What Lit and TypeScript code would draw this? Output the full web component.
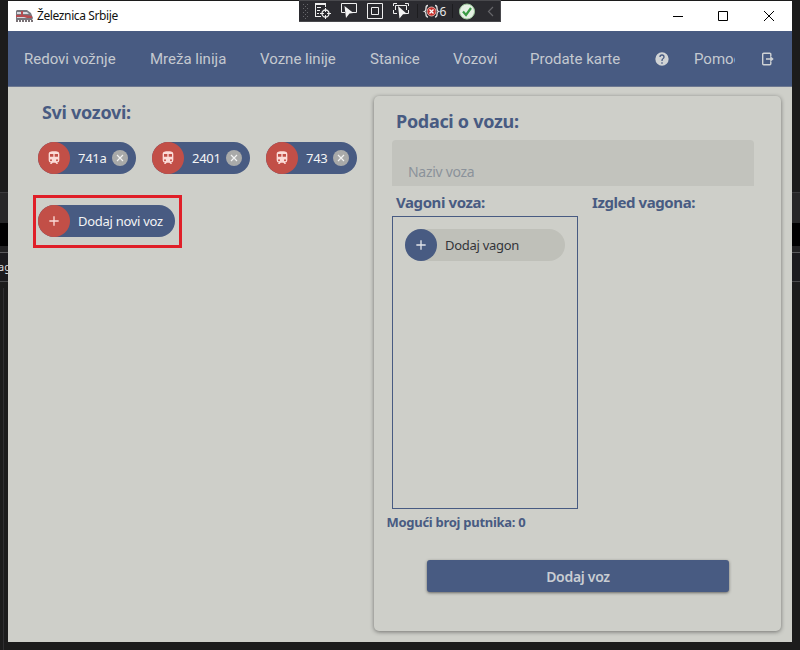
import { LitElement, html, css, svg } from "lit";
import { customElement, property } from "lit/decorators.js";

const trainPath = svg`<path fill-rule="evenodd" d="M12 2C8 2 4 2.500 4 6v9.500A3.500 3.500 0 0 0 7.500 19L6 20.500V21h2.200l2-2H14l2 2h2v-.5L16.500 19a3.500 3.500 0 0 0 3.500-3.500V6c0-3.500-3.600-4-8-4M7.500 17A1.500 1.500 0 1 1 9 15.500 1.500 1.500 0 0 1 7.500 17M11 10H6V6h5zm2 0V6h5v4zm3.500 7a1.500 1.500 0 1 1 1.500-1.500 1.500 1.500 0 0 1-1.500 1.500"/>`;
const plusPath = svg`<path d="M19 13h-6v6h-2v-6H5v-2h6V5h2v6h6z"/>`;

@customElement("icon-chip")
class IconChip extends LitElement {
  @property() label = "";
  @property() icon = "plus";
  @property({ type: Boolean }) removable = false;
  @property({ type: Boolean, reflect: true }) muted = false;
  static styles = css`
    :host { display: flex; align-items: center; box-sizing: border-box; height: 32px; border-radius: 16px; background: #485b82; color: #f3f4f5; font: 13px "Noto Sans", "Open Sans", sans-serif; }
    :host([muted]) { background: #bfc0b9; color: #33353a; }
    .disc { width: 32px; height: 32px; flex: none; border-radius: 50%; background: #c24f47; display: flex; align-items: center; justify-content: center; }
    :host([muted]) .disc { background: #485b82; }
    .disc svg { width: 16px; height: 16px; fill: #fbdcd8; }
    :host([muted]) .disc svg { fill: #e2e5ea; }
    .label { margin-left: 8px; flex: 1; white-space: nowrap; letter-spacing: -0.28px; }
    .remove { width: 16px; height: 16px; margin-right: 8px; border-radius: 50%; background: #a9aaa9; }
    .remove svg { display: block; width: 16px; height: 16px; stroke: #f2f3f2; stroke-width: 1.2; }
  `;
  render() {
    return html`<span class="disc"><svg viewBox="0 0 24 24">${this.icon === "train" ? trainPath : plusPath}</svg></span>
      <span class="label">${this.label}</span>
      ${this.removable ? html`<span class="remove"><svg viewBox="0 0 16 16"><path d="M5 5l6 6M11 5l-6 6"/></svg></span>` : ""}`;
  }
}

@customElement("debug-toolbar")
class DebugToolbar extends LitElement {
  static styles = css`
    :host { display: block; width: 202px; height: 22px; }
    svg { display: block; font: 12px "Noto Sans", sans-serif; }
  `;
  render() {
    return html`<svg width="202" height="22" viewBox="0 0 202 22" fill="none">
      <defs><pattern id="grip" width="4" height="4" patternUnits="userSpaceOnUse"><path fill="#67676b" d="M0 0h1v1H0zM2 2h1v1H2z"/></pattern></defs>
      <path fill="#2b2b30" d="M0 0h202v22H0z"/><path fill="#49494d" d="M0 0h202v1H0zM0 21h202v1H0zM201 0h1v22h-1z"/>
      <path fill="url(#grip)" d="M4 3h5v16H4z"/>
      <g stroke="#eeeeee">
        <path d="M16 4h11M16.500 4v12M26.500 4v3M16 16.500h6M18 7.500h4M18 10.500h3M18 13.500h2" /><path stroke-width="2" d="M16 4h11"/>
        <circle cx="26.500" cy="13.500" r="3.500" stroke-width="1.300"/><path d="M26.500 8v4M26.500 15v4M21 13.500h4M28 13.500h4"/>
        <path d="M46 12.500h-3.500v-9h15v9H53"/>
        <path d="M68.500 3.500h15v15h-15zM72.500 7.500h7v7h-7z"/>
        <path d="M94.500 6V3.500H98M106 3.500h3.500V6M94.500 10v3.500H98M109.500 10v3.500H106M96.500 10V5.500h11V10"/>
      </g>
      <path fill="#f4f4f4" d="M45.500 6l9 7-4 .5-3.500 4.500zM99 6l9 8-4 .3-3.500 4.200z"/>
      <path stroke="#1d1d20" d="M118.500 4v14M153.500 4v14"/>
      <path stroke="#e4e4e4" stroke-width="1.300" d="M129 5.500c-2 0-2 1-2 2.500s0 3-1.500 3.500c1.500.5 1.500 1.500 1.500 3s0 2.500 2 2.500M136 5.500c2 0 2 1 2 2.500s0 3 1.500 3.500c-1.500.5-1.500 1.500-1.500 3s0 2.500-2 2.500"/>
      <circle cx="132.500" cy="11.500" r="4.500" fill="#c8332e" stroke="#f0c9c4" stroke-width=".8"/><path stroke="#fff" stroke-width="1.300" d="M130.500 9.500l4 4M134.500 9.500l-4 4"/>
      <text x="140.500" y="16" fill="#e8e8e8">6</text>
      <circle cx="168" cy="11.500" r="7.500" fill="#e5f0e4" stroke="#9ecb9d"/><path stroke="#389b43" stroke-width="2.200" d="M164 11.500l3 3.500 5-7"/>
      <path stroke="#66666a" stroke-width="1.200" d="M194 7l-4.500 4.500L194 16"/>
    </svg>`;
  }
}

@customElement("app-root")
class AppRoot extends LitElement {
  static styles = css`
    :host { display: block; width: 800px; height: 650px; overflow: hidden; }
    * { box-sizing: border-box; }
    .desktop { position: relative; display: grid; grid-template-columns: 8px 784px 8px; height: 650px; padding-top: 1px; background: #1c1c1c; }
    .edge { display: flex; flex-direction: column; padding-top: 191px; overflow: hidden; }
    .panel { height: 31px; border-top: 1px solid #3b3b3d; background: #272728; }
    .black { height: 23px; background: #000; }
    .gap { height: 6px; background: #222223; }
    .strip { height: 30px; border-top: 1px solid #5a5a5c; border-bottom: 1px solid #4a4a4c; background: #1b1b1e; color: #ddd; font: 11px/28px "Noto Sans", sans-serif; white-space: nowrap; }
    .strip span { margin-left: -2px; }
    .rail { flex: 1; margin-top: 6px; margin-left: 3px; border-left: 1px solid #303032; }
    .window { height: 641px; background: #cecfc9; display: flex; flex-direction: column; }
    .titlebar { height: 30px; background: #fff; display: flex; align-items: center; padding: 0 17px 2px 8px; color: #111; font: 12px "Noto Sans", "Open Sans", sans-serif; }
    .title { flex: 1; margin-left: 4px; letter-spacing: -0.38px; }
    .titlebar svg { display: block; position: relative; top: 1px; }
    .toolbar { position: absolute; left: 299px; top: 0; }
    nav { height: 56px; flex: none; display: grid; grid-template-columns: 126px 110px 110px 83px 77px 124px 40px 67px 16px; align-items: center; padding-left: 16px; background: #485b82; border-bottom: 1px solid #6d7891; color: #c4c9d0; font: 15px Roboto, sans-serif; white-space: nowrap; }
    .clip { width: 41px; overflow: hidden; }
    nav svg { width: 16px; height: 16px; fill: #d0d3d5; display: block; }
    nav .exit { fill: none; stroke: #d0d3d5; stroke-width: 1.4; }
    .body { flex: 1; display: grid; grid-template-columns: 366px 407px; min-height: 0; }
    h1, h2, p { margin: 0; color: #485b82; font-family: "Noto Sans", "Open Sans", sans-serif; font-weight: 700; white-space: nowrap; }
    h1 { font-size: 18px; line-height: 24px; letter-spacing: -0.3px; }
    h2 { font-size: 15px; line-height: 20px; letter-spacing: -0.42px; }
    .trains { padding: 13px 0 0 25px; }
    .trains h1 { margin-left: 9px; }
    .chips { display: flex; gap: 16px; margin: 18px 0 0 5px; }
    .w98 { width: 98px; } .w91 { width: 91px; } .w160 { width: 160px; } .w137 { width: 137px; }
    .highlight { width: 149px; height: 53px; margin-top: 21px; border: 3px solid #e01f28; padding: 7px 2px; }
    .card { height: 535px; margin-top: 9px; border-radius: 5px; background: #cecfc9; box-shadow: 0 1px 4px rgba(0,0,0,.45); padding: 13px 27px 0 18px; display: flex; flex-direction: column; }
    .card h1 { margin-left: 4px; }
    .field { height: 46px; margin-top: 7px; flex: none; border-radius: 4px 4px 0 0; background: #c2c3bd; padding: 22px 16px 0; color: #8b929a; font: 14px/20px "Noto Sans", sans-serif; letter-spacing: -0.3px; }
    .heads { display: grid; grid-template-columns: 196px 1fr; padding-left: 4px; margin-top: 6px; }
    .wagons { width: 186px; height: 293px; margin-top: 4px; border: 1px solid #485b82; padding: 12px; }
    .count { font-size: 13px; line-height: 20px; margin: 3px 0 0 -5.5px; letter-spacing: -0.28px; }
    .submit { width: 302px; height: 32px; margin: 28px 0 0 35px; border: 0; border-radius: 3px; background: #485b82; box-shadow: 0 1px 3px rgba(0,0,0,.5); color: #c9cdd3; font: 600 14px "Noto Sans", sans-serif; letter-spacing: -0.3px; }
  `;
  edge(text: string) {
    return html`<div class="edge"><div class="panel"></div><div class="black"></div><div class="gap"></div><div class="strip"><span>${text}</span></div>${text ? html`<div class="rail"></div>` : ""}</div>`;
  }
  render() {
    return html`<div class="desktop">
      ${this.edge("ag")}
      <div class="window">
        <header class="titlebar">
          <svg width="17" height="14" viewBox="0 0 17 14"><path fill="#77777e" d="M1 1h10l4 3 2 5-1 2H0V2z"/><path fill="#d7d9e0" d="M1 3h4v2H1zM7 3h4l2 2H7zM1 8h10v1H1z"/><path fill="#b54b50" d="M0 6h10l6 1v2h-5L8 8H0zM5 2h2v4H5z"/><path stroke="#4d4348" stroke-width="1.500" stroke-dasharray="2 1" d="M0 12h17"/></svg>
          <span class="title">Železnica Srbije</span>
          <svg width="102" height="12" viewBox="0 0 102 12" fill="none" stroke="#000"><path d="M0 6.500h10M45.500 1.500h9v9h-9zM91 1l10 10M101 1L91 11"/></svg>
        </header>
        <nav>
          <span>Redovi vožnje</span><span>Mreža linija</span><span>Vozne linije</span><span>Stanice</span><span>Vozovi</span><span>Prodate karte</span>
          <svg viewBox="0 0 24 24"><path d="M15.070 11.250l-.9.920C13.450 12.890 13 13.500 13 15h-2v-.5c0-1.110.450-2.110 1.170-2.830l1.240-1.260c.370-.36.590-.86.590-1.410a2 2 0 0 0-4 0H8a4 4 0 0 1 8 0c0 .88-.36 1.670-.93 2.250M13 19h-2v-2h2M12 2a10 10 0 1 0 0 20 10 10 0 0 0 0-20"/></svg>
          <span class="clip">Pomoć</span>
          <svg class="exit" viewBox="0 0 16 16"><path d="M9.800 5.500V3.200a1 1 0 0 0-1-1H2.700a1 1 0 0 0-1 1v9.600a1 1 0 0 0 1 1h6.100a1 1 0 0 0 1-1v-2.300M5 8h5"/><path fill="#d0d3d5" stroke="none" d="M9.200 4.900L12.700 8l-3.500 3.100z"/></svg>
        </nav>
        <main class="body">
          <section class="trains">
            <h1>Svi vozovi:</h1>
            <div class="chips">
              <icon-chip class="w98" icon="train" label="741a" removable></icon-chip>
              <icon-chip class="w98" icon="train" label="2401" removable></icon-chip>
              <icon-chip class="w91" icon="train" label="743" removable></icon-chip>
            </div>
            <div class="highlight"><icon-chip class="w137" label="Dodaj novi voz"></icon-chip></div>
          </section>
          <section class="card">
            <h1>Podaci o vozu:</h1>
            <div class="field">Naziv voza</div>
            <div class="heads"><h2>Vagoni voza:</h2><h2>Izgled vagona:</h2></div>
            <div class="wagons"><icon-chip class="w160" label="Dodaj vagon" muted></icon-chip></div>
            <p class="count">Mogući broj putnika: 0</p>
            <button class="submit">Dodaj voz</button>
          </section>
        </main>
      </div>
      ${this.edge("")}
      <debug-toolbar class="toolbar"></debug-toolbar>
    </div>`;
  }
}
